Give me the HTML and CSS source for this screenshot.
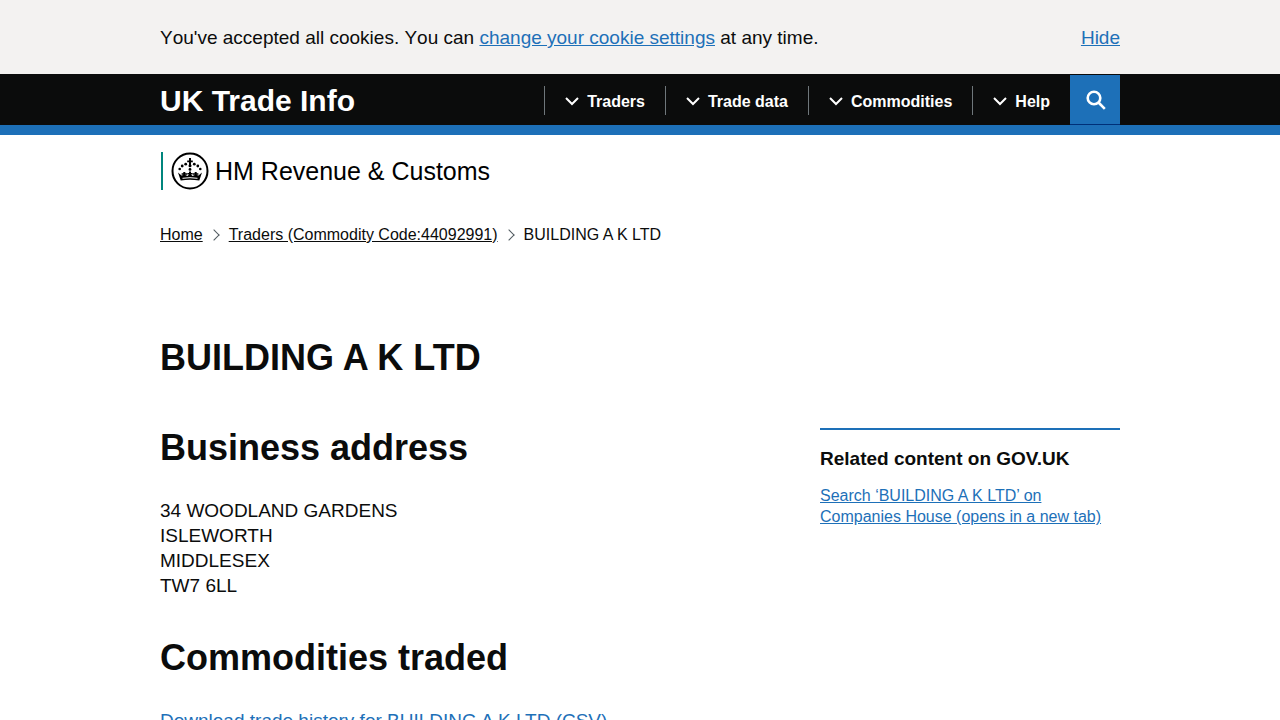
FILE: index.html
```html
<!DOCTYPE html>
<html lang="en">
<head>
    <meta charset="UTF-8">
    <meta name="viewport" content="width=device-width, initial-scale=1.0">
    <title>BUILDING A K LTD - UK Trade Info</title>
    <link rel="stylesheet" href="styles.css">
</head>
<body>
    <!-- Cookie message -->
    <div class="cookie-banner">
        <div class="container cookie-row">
            <p>You've accepted all cookies. You can <a href="#">change your cookie settings</a> at any time.</p>
            <button type="button" class="hide-button">Hide</button>
        </div>
    </div>

    <!-- Header -->
    <header class="header">
        <div class="container header-row">
            <a href="#" class="site-name">UK Trade Info</a>
            <nav class="nav">
                <button type="button" class="nav-item"><svg class="chevron" viewBox="0 0 14 9"><path d="M1 1l6 6 6-6"/></svg>Traders</button>
                <button type="button" class="nav-item"><svg class="chevron" viewBox="0 0 14 9"><path d="M1 1l6 6 6-6"/></svg>Trade data</button>
                <button type="button" class="nav-item"><svg class="chevron" viewBox="0 0 14 9"><path d="M1 1l6 6 6-6"/></svg>Commodities</button>
                <button type="button" class="nav-item"><svg class="chevron" viewBox="0 0 14 9"><path d="M1 1l6 6 6-6"/></svg>Help</button>
            </nav>
            <button type="button" class="search-button" aria-label="Search">
                <svg viewBox="0 0 20 20"><circle cx="8" cy="8" r="6.3"/><path d="M12.5 12.5l6.3 6.3"/></svg>
            </button>
        </div>
    </header>

    <div class="container">
        <!-- Department logo -->
        <div class="department">
            <svg class="crest" viewBox="0 0 38 38">
                <circle class="ring" cx="19" cy="19" r="17.5"/>
                <!-- cross -->
                <path d="M18 6h2v2.5h1.8v1.8H20V13h-2v-2.700h-1.800V8.500H18z"/>
                <!-- pearls -->
                <circle cx="19" cy="13.800" r="1.500"/>
                <circle cx="19" cy="17.400" r="1.400"/>
                <circle cx="14.700" cy="12.200" r="1.400"/>
                <circle cx="23.300" cy="12.200" r="1.400"/>
                <circle cx="11.200" cy="14" r="1.400"/>
                <circle cx="26.800" cy="14" r="1.400"/>
                <circle cx="8.700" cy="17" r="1.300"/>
                <circle cx="29.300" cy="17" r="1.300"/>
                <!-- base of the crown -->
                <path d="M7 20.500L10.500 23.500L12.300 23V20H14.300V23L16.500 24L18 22.500V19.500H20V22.500L21.500 24L23.700 23V20H25.700V23L27.500 23.500L31 20.500L28.300 28.500Q19 26.800 9.700 28.500Z"/>
                <path d="M10.600 21.300h5.400v1.400h-5.400zM16.300 21h5.400v1.400h-5.400zM22 21.300h5.400v1.400H22z"/>
                <path class="gap" d="M11.500 26.300q7.500-1.200 15 0"/>
            </svg>
            <span>HM Revenue &amp; Customs</span>
        </div>

        <!-- Breadcrumbs -->
        <nav aria-label="Breadcrumb">
            <ol class="breadcrumbs">
                <li><a href="#">Home</a></li>
                <li><a href="#">Traders (Commodity Code:44092991)</a></li>
                <li>BUILDING A K LTD</li>
            </ol>
        </nav>

        <main>
            <h1>BUILDING A K LTD</h1>
            <div class="columns">
                <div class="details">
                    <h2>Business address</h2>
                    <address>
                        34 WOODLAND GARDENS<br>
                        ISLEWORTH<br>
                        MIDDLESEX<br>
                        TW7 6LL
                    </address>
                    <h2>Commodities traded</h2>
                    <a href="#">Download trade history for BUILDING A K LTD (CSV)</a>
                </div>
                <aside class="related">
                    <h3>Related content on GOV.UK</h3>
                    <a href="#">Search ‘BUILDING A K LTD’ on Companies House (opens in a new tab)</a>
                </aside>
            </div>
        </main>
    </div>
</body>
</html>
```
FILE: styles.css
```css
* {
    margin: 0;
    padding: 0;
    box-sizing: border-box;
}

body {
    font-family: "Liberation Sans", Arial, sans-serif;
    font-size: 19px;
    line-height: 25px;
    color: #0b0c0c;
    background: #fff;
}

a {
    color: #1d70b8;
}

button {
    font: inherit;
    border: none;
    background: none;
    cursor: pointer;
}

.container {
    max-width: 960px;
    margin: 0 auto;
}

/* Cookie message */
.cookie-banner {
    background: #f3f2f1;
    padding: 25px 0 24px;
    font-kerning: none;
}

.cookie-row {
    display: flex;
    justify-content: space-between;
}

.hide-button {
    color: #1d70b8;
    text-decoration: underline;
}

/* Header */
.header {
    background: #0b0c0c;
    border-bottom: 10px solid #1d70b8;
}

.header-row {
    display: flex;
    align-items: center;
    padding-top: 1px;
}

.site-name {
    margin-right: auto;
    padding-top: 2px;
    color: #fff;
    font-size: 30px;
    line-height: 48px;
    font-weight: bold;
    text-decoration: none;
}

.nav {
    display: flex;
}

.nav-item {
    display: flex;
    align-items: center;
    gap: 8px;
    padding: 2px 20px 0;
    border-left: 1px solid #6f777b;
    color: #fff;
    font-size: 16px;
    line-height: 27px;
    font-weight: bold;
}

.chevron {
    width: 14px;
    height: 9px;
    fill: none;
    stroke: #fff;
    stroke-width: 2;
}

.search-button {
    display: flex;
    align-items: center;
    justify-content: center;
    width: 50px;
    height: 50px;
    padding-left: 2px;
    background: #1d70b8;
    border-bottom: 1px solid #003078;
}

.search-button svg {
    width: 20px;
    height: 20px;
    fill: none;
    stroke: #fff;
    stroke-width: 2.6;
}

/* Department logo */
.department {
    display: flex;
    align-items: center;
    gap: 6px;
    margin: 17px 0 0 1px;
    padding-left: 8px;
    border-left: 2px solid #00857d;
    font-size: 25px;
    line-height: 37px;
    color: #000;
}

.crest {
    width: 38px;
    height: 38px;
}

.ring {
    fill: none;
    stroke: #000;
    stroke-width: 2;
}

.gap {
    fill: none;
    stroke: #fff;
    stroke-width: 1;
}

/* Breadcrumbs */
.breadcrumbs {
    display: flex;
    margin-top: 35px;
    list-style: none;
    font-size: 16px;
    line-height: 20px;
}

.breadcrumbs a {
    color: #0b0c0c;
}

.breadcrumbs li {
    display: flex;
    align-items: center;
}

.breadcrumbs li + li::before {
    content: "";
    width: 7px;
    height: 7px;
    margin: 0 11px 0 7px;
    border: solid #505a5f;
    border-width: 1px 1px 0 0;
    transform: rotate(45deg);
}

/* Content */
main {
    padding-top: 93px;
}

h1, h2 {
    font-size: 36px;
    line-height: 40px;
}

h1 {
    margin-bottom: 50px;
}

h2 {
    margin-bottom: 30px;
}

.columns {
    display: grid;
    grid-template-columns: 2fr 1fr;
    align-items: start;
    gap: 60px;
}

address {
    margin-bottom: 40px;
    font-style: normal;
}

.related {
    padding-top: 16px;
    border-top: 2px solid #1d70b8;
    font-size: 16px;
    line-height: 21px;
}

.related h3 {
    margin-bottom: 14px;
    font-size: 19px;
    line-height: 25px;
}
```
